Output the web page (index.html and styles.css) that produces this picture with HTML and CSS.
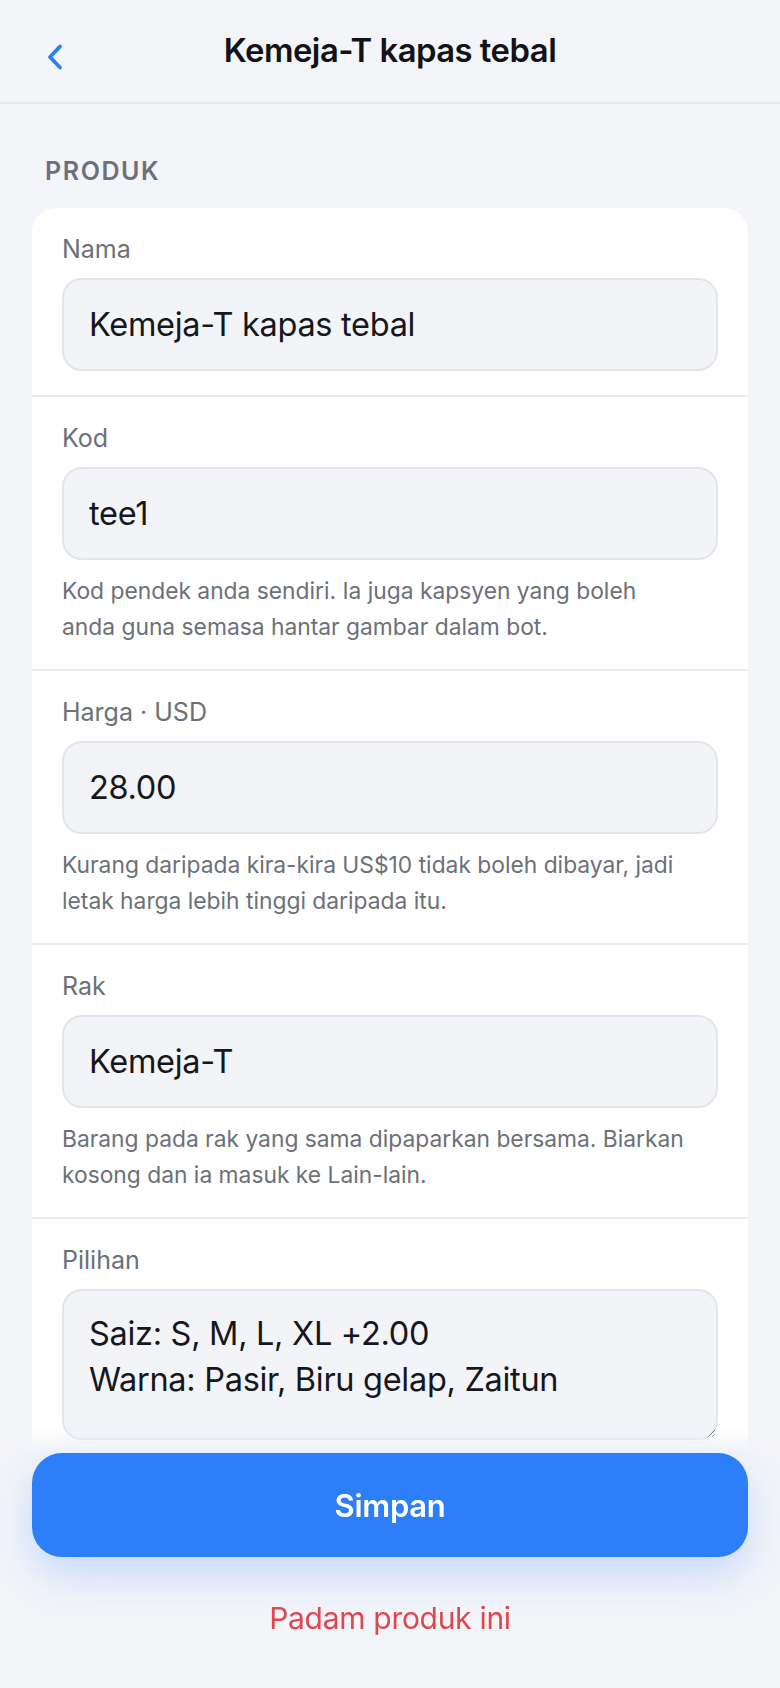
FILE: index.html
```html
<!DOCTYPE html>
<html lang="ms">
<head>
<meta charset="utf-8">
<title>Kemeja-T kapas tebal</title>
<link rel="stylesheet" href="styles.css">
</head>
<body>
<div class="app">
  <header class="topbar">
    <button class="back" aria-label="Kembali">
      <svg width="24" height="30" viewBox="0 0 24 30" fill="none"><path d="M17 4.5 L7 15 L17 25.5" stroke="#2d7ff9" stroke-width="3.8" stroke-linecap="round" stroke-linejoin="round"/></svg>
    </button>
    <h1 class="title">Kemeja-T kapas tebal</h1>
  </header>
  <main class="content">
    <div class="section-title">PRODUK</div>
    <div class="card">
      <div class="row">
        <label class="label">Nama</label>
        <input class="field" type="text" value="Kemeja-T kapas tebal">
      </div>
      <div class="row">
        <label class="label">Kod</label>
        <input class="field" type="text" value="tee1">
        <p class="help">Kod pendek anda sendiri. Ia juga kapsyen yang boleh anda&nbsp;guna semasa hantar gambar dalam bot.</p>
      </div>
      <div class="row">
        <label class="label">Harga · USD</label>
        <input class="field" type="text" value="28.00">
        <p class="help">Kurang daripada kira-kira US$10 tidak boleh dibayar, jadi letak harga lebih tinggi daripada itu.</p>
      </div>
      <div class="row">
        <label class="label">Rak</label>
        <input class="field" type="text" value="Kemeja-T">
        <p class="help">Barang pada rak yang sama dipaparkan bersama. Biarkan kosong dan ia masuk ke Lain-lain.</p>
      </div>
      <div class="row">
        <label class="label">Pilihan</label>
        <textarea class="field area">Saiz: S, M, L, XL +2.00
Warna: Pasir, Biru gelap, Zaitun</textarea>
      </div>
    </div>
  </main>
  <footer class="footer">
    <button class="save">Simpan</button>
    <button class="delete">Padam produk ini</button>
  </footer>
</div>
</body>
</html>
```
FILE: styles.css
```css
* { box-sizing: border-box; }
html, body {
  margin: 0;
  padding: 0;
  height: 100%;
}
body {
  background: #f4f5f9;
  font-family: Inter, "Noto Sans", "Liberation Sans", sans-serif;
  color: #15171c;
  overflow: hidden;
}
.app {
  height: 100vh;
  display: flex;
  flex-direction: column;
}
.topbar {
  position: relative;
  height: 104px;
  flex: none;
  display: flex;
  align-items: center;
  justify-content: center;
  border-bottom: 2px solid #e6e8ec;
  padding-bottom: 2px;
}
.back {
  position: absolute;
  left: 43px;
  top: 42px;
  border: 0;
  background: none;
  padding: 0;
  line-height: 0;
}
.title {
  margin: 0;
  font-size: 32.8px;
  font-weight: 600;
  letter-spacing: -0.5px;
  color: #111318;
}
.content {
  flex: 1;
  overflow: hidden;
  padding: 0 32px;
}
.section-title {
  margin: 51px 0 0 13px;
  font-size: 25px;
  line-height: 32px;
  font-weight: 600;
  letter-spacing: 1.6px;
  color: #6b7079;
}
.card {
  margin-top: 21px;
  background: #ffffff;
  border-radius: 24px;
}
.row {
  display: flex;
  flex-direction: column;
  padding: 25px 30px 24px 30px;
  border-bottom: 2px solid #ebecef;
}
.row:last-child { border-bottom: 0; }
.label {
  font-size: 25px;
  line-height: 32px;
  color: #6b7079;
}
.field {
  margin-top: 13px;
  height: 93px;
  width: 100%;
  border: 2px solid #e3e5ea;
  border-radius: 20px;
  background: #f3f4f8;
  padding: 0 25px;
  font-family: Inter, "Noto Sans", "Liberation Sans", sans-serif;
  font-size: 32.5px;
  letter-spacing: -0.3px;
  color: #15171c;
  outline: none;
}
.area {
  height: 151px;
  padding: 20px 25px;
  line-height: 46px;
  resize: vertical;
}
.help {
  margin: 13px 0 1px 0;
  font-size: 22.8px;
  line-height: 35.5px;
  color: #6b7079;
}
.footer {
  position: fixed;
  left: 0;
  right: 0;
  bottom: 0;
  padding: 26px 32px 50px 32px;
  background: linear-gradient(to bottom, rgba(244,245,249,0) 0, #f4f5f9 26px);
  display: flex;
  flex-direction: column;
  align-items: stretch;
}
.save {
  height: 104px;
  border: 0;
  border-radius: 30px;
  background: #2d7ff9;
  color: #ffffff;
  font-family: Inter, "Noto Sans", "Liberation Sans", sans-serif;
  font-size: 31px;
  font-weight: 600;
  letter-spacing: -0.3px;
  box-shadow: 0 18px 44px rgba(45,127,249,0.24);
}
.delete {
  margin-top: 41px;
  border: 0;
  background: none;
  padding: 0;
  font-family: Inter, "Noto Sans", "Liberation Sans", sans-serif;
  font-size: 30px;
  line-height: 40px;
  color: #e0464e;
  letter-spacing: -0.3px;
}
```
